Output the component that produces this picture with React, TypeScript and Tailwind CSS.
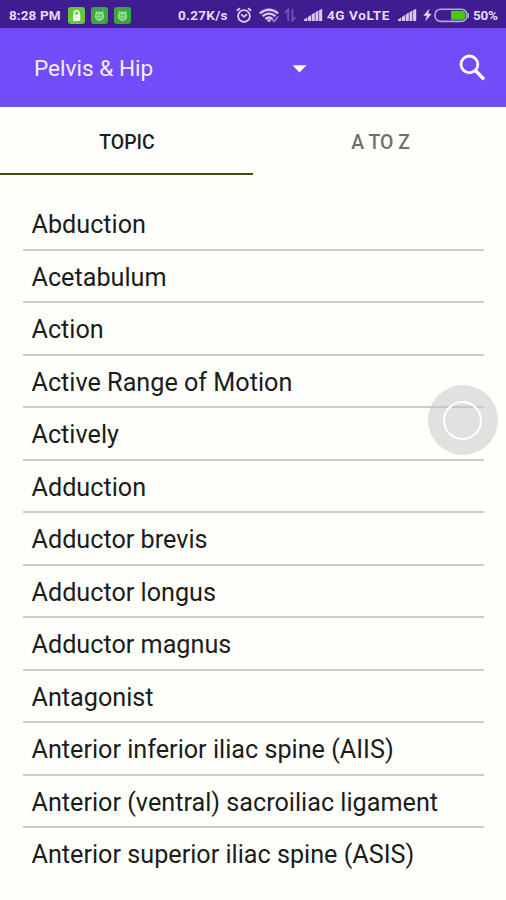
import React, { useState } from 'react';

const TOPICS = [
    'Abduction',
    'Acetabulum',
    'Action',
    'Active Range of Motion',
    'Actively',
    'Adduction',
    'Adductor brevis',
    'Adductor longus',
    'Adductor magnus',
    'Antagonist',
    'Anterior inferior iliac spine (AIIS)',
    'Anterior (ventral) sacroiliac ligament',
    'Anterior superior iliac spine (ASIS)',
];

const SignalIcon: React.FC = () => (
    <svg className="h-[14px] w-[19px] shrink-0" viewBox="0 0 19 14" fill="#d5c9f0">
        <path d="M0 13V11.5L3.2 9.5V13ZM3.9 13V9L7 7V13ZM7.7 13V6.5L10.8 4.6V13ZM11.5 13V4.2L14.4 2.6V13ZM15.1 13V2.2L18.2 0.8V13Z" />
    </svg>
);

const FaceBadge: React.FC = () => (
    <svg className="h-[17px] w-[17px] shrink-0" viewBox="0 0 17 17">
        <rect width="17" height="17" rx="3" fill="#3aa83f" />
        <path d="M4.6 4.6L6.3 6M12.4 4.6L10.7 6" stroke="#a9dfa0" strokeWidth="1.6" />
        <circle cx="8.5" cy="9.2" r="4.2" fill="#8fd388" stroke="#a9dfa0" />
        <circle cx="6.9" cy="8.2" r="0.8" fill="#3aa83f" />
        <circle cx="10.1" cy="8.2" r="0.8" fill="#3aa83f" />
        <path d="M6.4 10.6Q8.5 12 10.6 10.6" stroke="#5ab857" fill="none" />
    </svg>
);

const StatusBar: React.FC = () => (
    <div className="flex h-[28px] items-center bg-[#3f1d91] pt-[2px] pl-[9px] text-[13.5px] font-bold whitespace-nowrap text-[#e4daf8]">
        <span className="w-[59px] shrink-0 tracking-[0.1px]">8:28 PM</span>
        <div className="flex w-[110px] shrink-0 gap-[6px]">
            <svg className="h-[17px] w-[17px] shrink-0" viewBox="0 0 17 17">
                <rect width="17" height="17" rx="3" fill="#67c936" />
                <path d="M5 7.5V14H12.3V7.5Z" fill="#f5fff0" />
                <path d="M6.3 8V6Q6.3 3.8 8.6 3.8T11 6V8" fill="none" stroke="#f5fff0" strokeWidth="1.6" />
                <path d="M8.6 9.6V11" stroke="#a9e08c" strokeWidth="1.3" />
            </svg>
            <FaceBadge />
            <FaceBadge />
        </div>
        <span className="w-[58px] shrink-0 tracking-[0.3px]">0.27K/s</span>
        <svg className="h-[17px] w-[17px] shrink-0" viewBox="0 0 17 17" fill="none" stroke="#d8cdf2" strokeWidth="1.8">
            <circle cx="8" cy="9" r="5.9" />
            <path d="M5.2 7.3L8 9.8L11 7.2M0.8 3.8L4 1.3M15.2 3.8L12 1.3" />
        </svg>
        <svg className="ml-[6px] h-[15px] w-[20px] shrink-0" viewBox="0 0 20 15" fill="none" stroke="#d5c9f0" strokeWidth="2.3">
            <path d="M0.8 5.4Q10 -2 19.2 5.4M3.6 8.2Q10 3 16.4 8.2M6.4 11Q10 8 13.6 11" />
            <path d="M7.5 11.5H12.5L10 14.4Z" fill="#d5c9f0" stroke="none" />
            <path d="M13 11.4L15.2 13.4L19 8.5" stroke="#9b86cf" strokeWidth="1.6" />
        </svg>
        <svg className="ml-[5px] h-[14px] w-[13px] shrink-0" viewBox="0 0 13 14" fill="none" stroke="#7355b0" strokeWidth="1.8">
            <path d="M4.2 13V1.5L1 5M8.4 1V12.5L11.6 9" />
        </svg>
        <span className="w-[7px] shrink-0" />
        <SignalIcon />
        <span className="ml-[4px] w-[67px] shrink-0 tracking-[0.6px]">4G VoLTE</span>
        <span className="w-[4px] shrink-0" />
        <SignalIcon />
        <svg className="ml-[6px] h-[14px] w-[9px] shrink-0" viewBox="0 0 9 14" fill="#e4daf8">
            <path d="M6.5 0.5L0.3 7.8H3.8L2.2 13.5L8.7 5.8H5.2Z" />
        </svg>
        <svg className="ml-[2px] h-[15px] w-[35px] shrink-0" viewBox="0 0 35 15">
            <rect x="1" y="1.2" width="32" height="12.2" rx="5.5" fill="#3f1d91" stroke="#b7a6dc" strokeWidth="1.6" />
            <path d="M17 2.8H28Q31.5 2.8 31.5 7.3T28 11.8H17Z" fill="#4cc70b" />
            <path d="M34.2 5V10" stroke="#b7a6dc" strokeWidth="1.4" />
        </svg>
        <span className="ml-[4px] tracking-[-0.2px]">50%</span>
    </div>
);

export default function App() {
    const [activeTab, setActiveTab] = useState('topic');

    return (
        <div className="relative h-[900px] w-[506px] overflow-hidden bg-[#fefffb] font-['Roboto',sans-serif]">
            <StatusBar />

            <header className="flex h-[79px] items-center bg-[#714cf8] pr-[20px] pl-[34px] text-white">
                <button className="flex w-[272px] items-center justify-between text-[22.6px] text-[#f3edff]">
                    <span className="pt-[3px]">Pelvis &amp; Hip</span>
                    <svg className="mt-[3px] -mr-px h-[8px] w-[15px]" viewBox="0 0 15 8" fill="#ffffff">
                        <path d="M0.5 0.3H14.5L7.5 7.6Z" />
                    </svg>
                </button>
                <button className="ml-auto" aria-label="Search">
                    <svg className="h-[27px] w-[27px]" viewBox="0 0 27 27" fill="none" stroke="#ffffff" strokeWidth="2.8">
                        <circle cx="10.4" cy="10.4" r="8.4" />
                        <path d="M16.6 16.8L25 25.2" strokeWidth="3.5" />
                    </svg>
                </button>
            </header>

            <nav className="grid h-[68px] grid-cols-2 text-[19.4px] font-medium">
                <button
                    onClick={() => setActiveTab('topic')}
                    className={`border-b-2 pt-[6px] pl-px ${activeTab === 'topic' ? 'border-[#4c4718] text-[#1e1e1c]' : 'border-transparent text-[#6f706d]'}`}
                >
                    TOPIC
                </button>
                <button
                    onClick={() => setActiveTab('az')}
                    className={`border-b-2 pt-[6px] pl-[2px] ${activeTab === 'az' ? 'border-[#4c4718] text-[#1e1e1c]' : 'border-transparent text-[#6f706d]'}`}
                >
                    A TO Z
                </button>
            </nav>

            <ul className="mt-[23px] mr-[22px] ml-[23px] text-[25.2px] text-[#1c1c1b]">
                {TOPICS.map(topic => (
                    <li key={topic} className="flex h-[52.5px] items-center border-b-2 border-[#cccdca] pt-[4px] pl-[8.5px] whitespace-nowrap last:border-transparent">
                        {topic}
                    </li>
                ))}
            </ul>

            {/* floating assistive button */}
            <div className="absolute top-[385px] left-[427.5px] flex h-[70px] w-[70px] items-center justify-center rounded-full bg-[#c4c4c4]/50">
                <div className="h-[39px] w-[39px] rounded-full border-2 border-white" />
            </div>
        </div>
    );
}
